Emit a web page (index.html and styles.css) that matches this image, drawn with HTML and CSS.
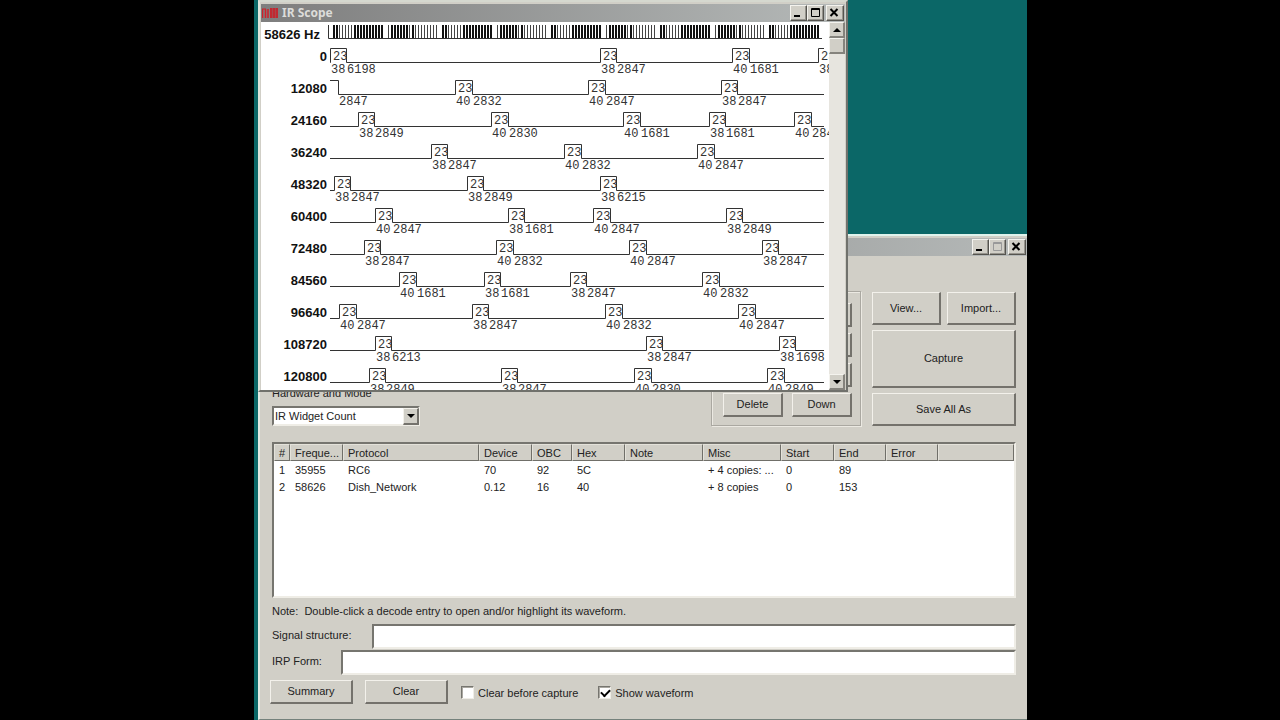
FILE: index.html
```html
<!DOCTYPE html>
<html lang="en">
<head>
<meta charset="utf-8">
<title>IR Scope</title>
<link rel="stylesheet" href="styles.css">
</head>
<body>
<main class="desktop">
  <section class="window app">
    <header class="titlebar">
      <div class="caption-buttons">
        <button class="cap" aria-label="Minimize"><svg viewBox="0 0 12 10"><path d="M2 8h6" stroke="#000" stroke-width="2"/></svg></button>
        <button class="cap" aria-label="Maximize" disabled><svg viewBox="0 0 12 10"><path d="M2.500 .500h8v8h-8z M2 1.500h8" fill="none" stroke="#999"/></svg></button>
        <button class="cap close" aria-label="Close"><svg viewBox="0 0 12 10"><path d="M2.500 1l7 7M9.500 1l-7 7" stroke="#000" stroke-width="2"/></svg></button>
      </div>
    </header>
    <div class="app-body">
      <div class="top">
        <div class="mode">
          <label for="mode">Hardware and Mode</label>
          <div class="combo">
            <select id="mode"><option>IR Widget Count</option></select>
            <span class="combo-arrow"><svg viewBox="0 0 8 4"><path d="M0 0h8L4 4z"/></svg></span>
          </div>
        </div>
        <div class="group">
          <button class="btn"></button><button class="btn"></button>
          <button class="btn"></button><button class="btn"></button>
          <button class="btn"></button><button class="btn"></button>
          <button class="btn">Delete</button><button class="btn">Down</button>
        </div>
        <div class="actions">
          <button class="btn">View...</button><button class="btn">Import...</button>
          <button class="btn wide">Capture</button>
          <button class="btn wide">Save All As</button>
        </div>
      </div>
      <div class="list">
        <table>
          <colgroup><col class="c16"><col class="c53"><col class="c136"><col class="c53"><col class="c40"><col class="c53"><col class="c78"><col class="c78"><col class="c53"><col class="c52"><col class="c52"><col></colgroup>
          <thead><tr><th>#</th><th>Freque...</th><th>Protocol</th><th>Device</th><th>OBC</th><th>Hex</th><th>Note</th><th>Misc</th><th>Start</th><th>End</th><th>Error</th><th></th></tr></thead>
          <tbody>
            <tr><td>1</td><td>35955</td><td>RC6</td><td>70</td><td>92</td><td>5C</td><td></td><td>+ 4 copies: ...</td><td>0</td><td>89</td><td></td><td></td></tr>
            <tr><td>2</td><td>58626</td><td>Dish_Network</td><td>0.12</td><td>16</td><td>40</td><td></td><td>+ 8 copies</td><td>0</td><td>153</td><td></td><td></td></tr>
          </tbody>
        </table>
      </div>
      <p class="note">Note:&nbsp; Double-click a decode entry to open and/or highlight its waveform.</p>
      <div class="field"><label class="label-wide" for="sig">Signal structure:</label><input id="sig" type="text"></div>
      <div class="field"><label class="label-narrow" for="irp">IRP Form:</label><input id="irp" type="text"></div>
      <div class="bottom">
        <button class="btn">Summary</button>
        <button class="btn">Clear</button>
        <label class="check"><input type="checkbox">Clear before capture</label>
        <label class="check second"><input type="checkbox" checked>Show waveform</label>
      </div>
    </div>
  </section>

  <section class="window scope">
    <header class="titlebar">
      <svg class="logo" viewBox="0 0 16 10"><path d="M0 1h4" stroke="#c8242c" stroke-width="1"/><path d="M.500 1v9M3.500 1v9M6 1v9M9 0v10M12 0v10M15 0v10" stroke="#d0202a" stroke-width="1.500" fill="none"/><path d="M8 0h8v10h-8z" fill="#c4202a" fill-opacity=".6"/></svg>
      <h1>IR Scope</h1>
      <div class="caption-buttons">
        <button class="cap" aria-label="Minimize"><svg viewBox="0 0 12 10"><path d="M2 8h6" stroke="#000" stroke-width="2"/></svg></button>
        <button class="cap" aria-label="Maximize"><svg viewBox="0 0 12 10"><path d="M2.500 .500h8v8h-8z M2 1.500h8" fill="none" stroke="#000"/></svg></button>
        <button class="cap close" aria-label="Close"><svg viewBox="0 0 12 10"><path d="M2.500 1l7 7M9.500 1l-7 7" stroke="#000" stroke-width="2"/></svg></button>
      </div>
    </header>
    <div class="scope-body">
      <div class="traces" id="traces"></div>
      <div class="scrollbar">
        <button class="scroll-btn" aria-label="Scroll up"><svg viewBox="0 0 8 4"><path d="M0 4h8L4 0z"/></svg></button>
        <div class="thumb"></div>
        <button class="scroll-btn down" aria-label="Scroll down"><svg viewBox="0 0 8 4"><path d="M0 0h8L4 4z"/></svg></button>
      </div>
    </div>
  </section>
</main>
<script src="waves.js"></script>
</body>
</html>
```
FILE: styles.css
```css
* { box-sizing: border-box; }
body {
  margin: 0;
  background: #000;
  color: #222;
  font: 11px/14px "Liberation Sans", Arial, sans-serif;
}
button, input, select { font: inherit; color: inherit; border-radius: 0; }
.desktop {
  position: relative;
  height: 100vh;
  margin: 0 253px 0 254px;
  overflow: hidden;
  background: #0b6767;
}
.window { position: absolute; background: #d1cfc7; }
.app {
  left: 4px;
  right: 0;
  top: 234px;
  border-top: 2px solid #dff3ec;
  border-left: 2px solid #e4ebe4;
  border-bottom: 1px solid #75827c;
}
.scope {
  left: 4px;
  top: 0;
  width: 590px;
  border: 2px solid;
  border-color: #d5d8cf #70716c #70716c #dfe5dc;
}
.titlebar {
  display: flex;
  align-items: center;
  height: 18px;
  margin: 2px 1px 0;
  background: linear-gradient(90deg, #7e7e7e, #b5b9b8);
}
.app .titlebar { margin-right: 0; }
.titlebar h1 {
  margin: 0;
  color: #dcdcda;
  font: bold 12px/18px "Noto Sans", sans-serif;
}
.logo { width: 16px; height: 10px; margin: 0 4px 0 1px; }
.caption-buttons { display: flex; margin-left: auto; padding-right: 1px; }
.cap {
  width: 17px;
  height: 16px;
  padding: 1px 1px;
  border: 1px solid;
  border-color: #f4f3ee #55544f #55544f #f4f3ee;
  background: #d1cfc7;
  box-shadow: inset -1px -1px #96948d;
}
.cap svg { display: block; width: 12px; height: 10px; }
.close { margin-left: 2px; width: 18px; }

.btn {
  padding: 0 0 1px;
  border: solid;
  border-width: 1px 2px 2px 1px;
  border-color: #f3f1eb #74726c #74726c #f3f1eb;
  background: #d1cfc7;
}
.app-body { padding: 35px 11px 15px 12px; }
.top { display: flex; align-items: flex-end; gap: 11px; height: 135px; }
.mode { flex: 1; display: flex; flex-direction: column; gap: 6px; }
.combo { position: relative; width: 148px; height: 20px; }
.combo select {
  appearance: none;
  display: block;
  width: 100%;
  height: 100%;
  padding: 0 20px 1px 1px;
  border: 2px solid;
  border-color: #76756f #efede6 #efede6 #76756f;
  background: #fff;
}
.combo-arrow {
  position: absolute;
  top: 2px;
  right: 1px;
  bottom: 1px;
  width: 16px;
  border: solid;
  border-width: 1px 2px 2px 1px;
  border-color: #f3f1eb #74726c #74726c #f3f1eb;
  background: #d1cfc7;
  pointer-events: none;
}
.combo-arrow svg { display: block; width: 8px; height: 4px; margin: 5px auto 0; }
.group {
  display: grid;
  grid-template-columns: 60px 60px;
  grid-auto-rows: 24px;
  gap: 6px 9px;
  padding: 11px 8px 8px 11px;
  border: 1px solid #aaa8a1;
  box-shadow: inset 1px 1px #ebe9e2, 1px 1px #ebe9e2;
}
.actions {
  display: grid;
  grid-template-columns: 1fr 1fr;
  grid-template-rows: 33px 58px 33px;
  gap: 5px 6px;
  width: 144px;
}
.wide { grid-column: span 2; }

.list, .field input {
  border: 2px solid;
  border-color: #76756f #efede6 #efede6 #76756f;
  background: #fff;
}
.list { height: 156px; margin-top: 16px; }
table { width: 100%; table-layout: fixed; border-collapse: separate; border-spacing: 0; }
th, td { padding: 0 0 0 5px; text-align: left; font-weight: normal; white-space: nowrap; }
th {
  height: 17px;
  background: #d1cfc7;
  border: 1px solid;
  border-color: #e4e2da #706f69 #706f69 #e4e2da;
  padding-left: 4px;
}
td { height: 17px; }
.c16 { width: 16px; }
.c40 { width: 40px; }
.c52 { width: 52px; }
.c53 { width: 53px; }
.c78 { width: 78px; }
.c136 { width: 136px; }
.note { margin: 6px 0; }
.field { display: flex; align-items: flex-start; height: 26px; }
.field input { flex: 1; min-width: 0; height: 25px; }
.label-wide { width: 100px; padding-top: 4px; }
.label-narrow { width: 69px; padding-top: 4px; }
.bottom { display: flex; align-items: center; margin: 4px 0 0 -2px; }
.bottom .btn { width: 83px; height: 24px; margin-right: 12px; }
.check { display: flex; align-items: center; gap: 4px; padding: 1px 0 0 1px; }
.second { margin-left: 19px; }
.check input {
  appearance: none;
  width: 13px;
  height: 13px;
  margin: 0;
  border: 1px solid;
  border-color: #76756f #efede6 #efede6 #76756f;
  background: #fff;
  box-shadow: inset 1px 1px #aaa8a1;
}
.check input:checked::after {
  content: "";
  display: block;
  width: 7px;
  height: 4px;
  margin: 2px 0 0 2px;
  border: solid #000;
  border-width: 0 0 2px 2px;
  transform: rotate(-45deg);
}

.scope-body { display: flex; height: 368px; margin: 0 1px; }
.traces { flex: 1; overflow: hidden; background: #fff; }
.trace { display: flex; height: 32px; }
.trace.overview { height: 21px; }
.trace b {
  width: 66px;
  margin-right: 1px;
  color: #111;
  font: bold 13px/28px "Liberation Sans", Arial, sans-serif;
  text-align: right;
  white-space: nowrap;
}
.trace.overview b { padding-right: 7px; line-height: 25px; }
.trace svg { display: block; width: 500px; height: 32px; overflow: visible; }
.trace.overview svg { height: 21px; }
.trace path { fill: none; stroke: #333; }
.trace .thin { stroke: #444; }
.trace .thick { stroke: #111; stroke-width: 2; }
.trace text { fill: #333; font: 12px "Liberation Mono", "Courier New", monospace; }
.scrollbar { display: flex; flex-direction: column; width: 16px; background: #e7e5df; }
.scroll-btn, .thumb {
  height: 16px;
  padding: 0;
  border: solid;
  border-width: 1px 2px 2px 1px;
  border-color: #f4f3ee #85837d #85837d #f4f3ee;
  background: #d1cfc7;
}
.scroll-btn svg { display: block; width: 8px; height: 4px; margin: 0 auto; }
.down { margin-top: auto; }
```
FILE: waves.js
```js
// Each pulse is [x, on count, off count]; x is measured in plot pixels.
const rows = [
  [0, [[2, 38, 6198], [272, 38, 2847], [404, 40, 1681], [490, 38, 2847]]],
  [12080, [[127, 40, 2832], [260, 40, 2847], [393, 38, 2847]], [11, 2847]],
  [24160, [[30, 38, 2849], [163, 40, 2830], [295, 40, 1681], [381, 38, 1681], [466, 40, 2849]]],
  [36240, [[103, 38, 2847], [236, 40, 2832], [369, 40, 2847]]],
  [48320, [[6, 38, 2847], [139, 38, 2849], [272, 38, 6215]]],
  [60400, [[47, 40, 2847], [180, 38, 1681], [265, 40, 2847], [398, 38, 2849]]],
  [72480, [[36, 38, 2847], [168, 40, 2832], [301, 40, 2847], [434, 38, 2847]]],
  [84560, [[71, 40, 1681], [156, 38, 1681], [242, 38, 2847], [374, 40, 2832]]],
  [96640, [[11, 40, 2847], [144, 38, 2847], [277, 40, 2832], [410, 40, 2847]]],
  [108720, [[47, 38, 6213], [318, 38, 2847], [451, 38, 1698]]],
  [120800, [[41, 38, 2849], [173, 38, 2847], [306, 40, 2830], [439, 40, 2849]]]
];
const END = 496;
const patterns = ["22111112222222222", "12222221211111111"];

function overview() {
  let thin = "", thick = "";
  for (let g = 0; g < 9; g++) {
    [...patterns[g % 2]].forEach((bar, i) => {
      const x = Math.round(5 + g * 54.5) + i * 3;
      if (bar === "2") thick += `M${x + 1} 3v13`;
      else thin += `M${x + 0.5} 3v13`;
    });
  }
  return `<div class="trace overview"><b>58626 Hz</b><svg><path d="M.5 3v13.5H494"/><path class="thin" d="${thin}"/><path class="thick" d="${thick}"/></svg></div>`;
}

function trace([label, pulses, tail]) {
  let d = "M2 19.5", text = "";
  if (tail) {
    d = `M2 5.5H${tail[0] - 0.5}V19.5`;
    text += `<text x="${tail[0]}" y="30">${tail[1]}</text>`;
  }
  for (const [x, on, off] of pulses) {
    const w = on === 40 ? 17 : 16;
    d += `H${x + 0.5}V5.5H${Math.min(x + w + 0.5, END)}`;
    if (x + w < END) d += "V19.5";
    text += `<text x="${x + 3}" y="17">23</text><text x="${x + 1}" y="30">${on}</text>`;
    if (x + w < END) text += `<text x="${x + w + 1}" y="30">${off}</text>`;
  }
  if (pulses[pulses.length - 1][0] + 17 < END) d += `H${END}`;
  return `<div class="trace"><b>${label}</b><svg><path d="${d}"/>${text}</svg></div>`;
}

document.getElementById("traces").innerHTML = overview() + rows.map(trace).join("");
```
